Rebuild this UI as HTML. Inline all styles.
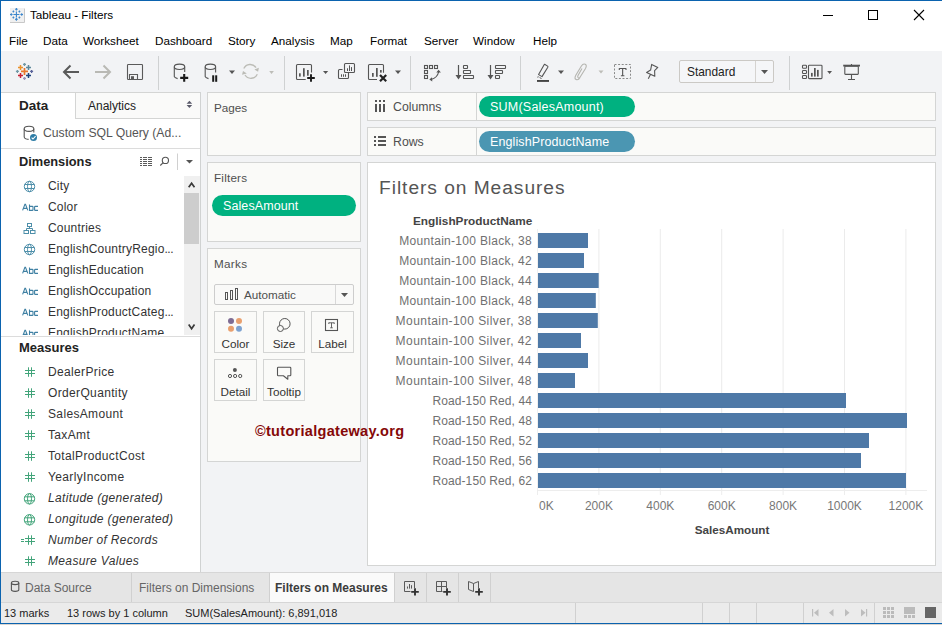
<!DOCTYPE html>
<html><head><meta charset="utf-8">
<style>
*{margin:0;padding:0;box-sizing:border-box}
html,body{width:942px;height:625px;overflow:hidden;background:#fff}
body{position:relative;font-family:"Liberation Sans",sans-serif;font-size:12px;color:#333}
.a{position:absolute;white-space:nowrap}
.t{position:absolute;white-space:nowrap;line-height:14px}
svg{position:absolute;overflow:visible}
/* window border */
#bt{left:0;top:0;width:942px;height:1px;background:#0B63AF}
#bl{left:0;top:0;width:1px;height:624px;background:#0B63AF}
#bb{left:0;top:623px;width:942px;height:1px;background:#0B63AF}
#bb2{left:0;top:624px;width:942px;height:1px;background:#DAD5D0}
#tb{left:1px;top:51px;width:941px;height:41px;background:#F2F3F5}
#tbl{left:1px;top:92px;width:941px;height:1px;background:#D5D7D7}
.sep{position:absolute;width:1px;background:#CFD1D2;top:56px;height:34px}
.menu{top:34px;font-size:11.7px;color:#000}
/* panels */
#lp{left:1px;top:92px;width:199px;height:480px;background:#fff;border-top:1px solid #D4D5D4}
#lpb{left:200px;top:92px;width:1px;height:480px;background:#D0D2D2}
#mid{left:201px;top:92px;width:741px;height:480px;background:#F2F3F5}
.card{position:absolute;background:#FAFAF8;border:1px solid #D4D5D4}
.pill{position:absolute;border-radius:11px;color:#fff;font-size:12.5px;line-height:23px;padding-left:11px;letter-spacing:0.1px;overflow:hidden}
.green{background:#00B180}
.blue{background:#4B96B2}
.it{position:absolute;left:48px;font-size:12px;color:#333;line-height:14px}
.ic{position:absolute;left:22px}
</style></head><body>
<div class="a" id="bt"></div><div class="a" id="bl"></div><div class="a" id="bb"></div><div class="a" id="bb2"></div>

<!-- title bar -->
<svg style="left:0;top:0" width="30" height="30">
<rect x="10" y="8" width="14" height="14" fill="#F0F0F0"/>
<path d="M24.5 8.5V22.5H10" fill="none" stroke="#C8C8C8" stroke-width="1"/>
<g stroke="#3B86CC" stroke-width="1.1" fill="none">
<path d="M16.4 11.5V17.5M13.4 14.5H19.4"/>
<path d="M16.4 7.9V10.5M15.1 9.2H17.7"/><path d="M16.4 18.1V20.7M15.1 19.4H17.7"/>
<path d="M11.3 13.2V15.8M10 14.5H12.6"/><path d="M21.7 13.2V15.8M20.4 14.5H23"/>
<path d="M13.4 10.6V12.4M12.5 11.5H14.3"/><path d="M19.4 10.6V12.4M18.5 11.5H20.3"/>
<path d="M13.4 16.6V18.4M12.5 17.5H14.3"/><path d="M19.4 16.6V18.4M18.5 17.5H20.3"/>
</g></svg>
<div class="t" style="left:30px;top:8px;font-size:11.7px;color:#000">Tableau - Filters</div>
<svg style="left:823px;top:10px" width="12" height="12"><path d="M0 5.5H10" stroke="#000" stroke-width="1"/></svg>
<svg style="left:868px;top:10px" width="12" height="12"><rect x="0.5" y="0.5" width="9" height="9" fill="none" stroke="#000" stroke-width="1"/></svg>
<svg style="left:914px;top:10px" width="12" height="12"><path d="M0 0L10 10M10 0L0 10" stroke="#000" stroke-width="1.1"/></svg>

<!-- menu -->
<div class="t menu" style="left:9px">File</div>
<div class="t menu" style="left:43px">Data</div>
<div class="t menu" style="left:83px">Worksheet</div>
<div class="t menu" style="left:155px">Dashboard</div>
<div class="t menu" style="left:228px">Story</div>
<div class="t menu" style="left:271px">Analysis</div>
<div class="t menu" style="left:330px">Map</div>
<div class="t menu" style="left:370px">Format</div>
<div class="t menu" style="left:424px">Server</div>
<div class="t menu" style="left:473px">Window</div>
<div class="t menu" style="left:533px">Help</div>

<!-- toolbar -->
<div class="a" id="tb"></div>
<div class="sep" style="left:48px"></div>
<div class="sep" style="left:158px"></div>
<div class="sep" style="left:284px"></div>
<div class="sep" style="left:410px"></div>
<div class="sep" style="left:520px"></div>
<div class="sep" style="left:789px"></div>
<svg style="left:0;top:0" width="942" height="100" viewBox="0 0 942 100">
<!-- tableau logo -->
<g stroke-width="1.5" fill="none">
<path d="M24.5 67.9V74.9M21 71.4H28" stroke="#E8762B" stroke-width="1.7"/>
<path d="M20.5 64.9V69.9M18 67.4H23" stroke="#EB912B"/>
<path d="M28.5 64.9V69.9M26 67.4H31" stroke="#5B879B"/>
<path d="M20.5 73V78M18 75.5H23" stroke="#C72035"/>
<path d="M28.5 73V78M26 75.5H31" stroke="#1F447E"/>
<path d="M24.5 62.9V65.9M23 64.4H26" stroke="#7099A6" stroke-width="1.3"/>
<path d="M17.4 69.9V72.9M15.9 71.4H18.9" stroke="#7099A6" stroke-width="1.3"/>
<path d="M31.6 69.9V72.9M30.1 71.4H33.1" stroke="#59629A" stroke-width="1.3"/>
<path d="M24.5 76.9V79.9M23 78.4H26" stroke="#9A93BA" stroke-width="1.3"/>
</g>
<!-- back / forward -->
<path d="M64 72H79M70.5 65.5L64 72L70.5 78.5" fill="none" stroke="#5A5A5A" stroke-width="2"/>
<path d="M95 72H110M103.5 65.5L110 72L103.5 78.5" fill="none" stroke="#B9B9B4" stroke-width="2"/>
<!-- save -->
<rect x="127.5" y="64.5" width="15" height="15" rx="0.8" fill="none" stroke="#5A5A5A" stroke-width="1.1"/>
<path d="M129.5 79.5V74.5H137.5V79.5" fill="none" stroke="#5A5A5A" stroke-width="1.1"/>
<rect x="131" y="76.2" width="3" height="3.3" fill="#5A5A5A"/>
<!-- db add -->
<g fill="none" stroke="#555" stroke-width="1.1">
<ellipse cx="179.5" cy="66.8" rx="5.2" ry="2.7"/>
<path d="M174.3 66.8V76.6Q174.6 77.8 177.6 78.6"/><path d="M184.7 66.8V72"/>
<ellipse cx="210.4" cy="66.8" rx="5.2" ry="2.7"/>
<path d="M205.2 66.8V76.6Q205.5 77.8 208.5 78.6"/><path d="M215.6 66.8V72.6"/>
</g>
<path d="M184.2 74V81.8M180.2 77.9H188.2" stroke="#1A1A1A" stroke-width="2.1"/>
<g fill="#1A1A1A"><rect x="212.2" y="75.3" width="2" height="6.5"/><rect x="215.2" y="75.3" width="2" height="6.5"/></g>
<path d="M229 70.5h6l-3 3.5z" fill="#555"/>
<!-- refresh -->
<g fill="none" stroke="#BCBCB6" stroke-width="1.3">
<path d="M243.8 68.6A7 7 0 0 1 256 67.6"/><path d="M257.3 74.2A7 7 0 0 1 245 75"/>
</g>
<path d="M258.9 67.8L254.4 69.5L258.1 71.8z M242 74.8L243 71L246.8 73.4z" fill="#BCBCB6"/>
<path d="M269.2 71.1h4.7l-2.35 2.8z" fill="#BDBDB8"/>
<!-- new worksheet -->
<path d="M305.7 79.5H297.5Q296.5 79.5 296.5 78.5V65.5Q296.5 64.5 297.5 64.5H310.5Q311.5 64.5 311.5 65.5V72.6" fill="none" stroke="#555" stroke-width="1.1"/>
<g fill="#555"><rect x="299" y="73.3" width="1.7" height="3.3"/><rect x="303" y="68.2" width="1.7" height="8.4"/><rect x="307" y="70" width="1.7" height="5.7"/></g>
<path d="M311 74.3V81.7M307.2 78H314.8" stroke="#1A1A1A" stroke-width="1.9"/>
<path d="M323 71h5.2l-2.6 3z" fill="#555"/>
<!-- duplicate -->
<g fill="none" stroke="#555" stroke-width="1.1">
<rect x="344.5" y="63.5" width="10" height="9" rx="1"/>
<path d="M342.5 69.5H339.5Q338.5 69.5 338.5 70.5V77.5Q338.5 78.5 339.5 78.5H347.5Q348.5 78.5 348.5 77.5V73"/>
</g>
<g fill="#555"><rect x="347" y="68.3" width="1" height="2.7"/><rect x="349" y="65.4" width="1" height="5.6"/><rect x="351" y="67.1" width="1" height="3.9"/><rect x="341" y="74.3" width="1" height="2.5"/><rect x="343" y="74.3" width="1" height="2.5"/><rect x="345" y="74.3" width="1" height="2.5"/></g>
<!-- clear -->
<path d="M377 79.5H369.5Q368.5 79.5 368.5 78.5V65.5Q368.5 64.5 369.5 64.5H382.5Q383.5 64.5 383.5 65.5V72.8" fill="none" stroke="#555" stroke-width="1.1"/>
<g fill="#555"><rect x="372" y="73" width="1.7" height="3.8"/><rect x="376" y="68" width="1.7" height="8.8"/><rect x="380" y="70" width="1.7" height="2.6"/></g>
<path d="M380 75L386.2 81.2M386.2 75L380 81.2" stroke="#222" stroke-width="2.2"/>
<path d="M395 70.5h6l-3 3.5z" fill="#555"/>
<!-- swap -->
<g fill="none" stroke="#555" stroke-width="1.1">
<rect x="424.5" y="65.5" width="3" height="3"/><rect x="429.5" y="65.5" width="3" height="3"/><rect x="434.5" y="65.5" width="3" height="3"/>
<rect x="424.5" y="70.5" width="3" height="3"/><rect x="424.5" y="75.5" width="3" height="3"/>
<path d="M438.6 72Q437.5 77.5 431 79.6"/>
</g>
<path d="M438.6 69.8L436.3 72.6H440.9z M429.3 79.6L432 77.3L432.3 81.6z" fill="#555"/>
<!-- sort asc -->
<path d="M458.5 65V78" stroke="#555" stroke-width="1.2"/><path d="M455.5 75L458.5 79.5L461.5 75z" fill="#555"/>
<g fill="none" stroke="#555" stroke-width="1.1">
<rect x="463.5" y="65.5" width="4" height="3" rx="0.5"/><rect x="463.5" y="70.5" width="7" height="3" rx="0.5"/><rect x="463.5" y="75.5" width="10" height="3" rx="0.5"/>
</g>
<!-- sort desc -->
<path d="M490.5 65V78" stroke="#555" stroke-width="1.2"/><path d="M487.5 75L490.5 79.5L493.5 75z" fill="#555"/>
<g fill="none" stroke="#555" stroke-width="1.1">
<rect x="495.5" y="65.5" width="10" height="3" rx="0.5"/><rect x="495.5" y="70.5" width="7" height="3" rx="0.5"/><rect x="495.5" y="75.5" width="4" height="3" rx="0.5"/>
</g>
<!-- highlighter -->
<path d="M544.6 64.3L547.6 66.1Q548.2 66.6 547.8 67.3L542 76.6L538.6 74.6L544 65Q544.2 64.3 544.6 64.3z" fill="none" stroke="#555" stroke-width="1.1" stroke-linejoin="round"/>
<path d="M538.2 76.3L537.8 77.6M539.6 77.6L541.5 78.5" stroke="#555" stroke-width="1"/>
<rect x="537" y="80" width="12" height="1.9" fill="#444"/>
<path d="M558 70.5h6l-3 3.5z" fill="#555"/>
<!-- paperclip -->
<path d="M582 68.5L578 75.5Q577.2 77.2 578.3 77.8Q579.5 78.4 580.3 76.8L585.5 68.5Q587.2 65.5 585.2 64.3Q583.2 63.2 581.4 66L575.8 75.3Q574 78.8 576.2 79.6Q578.4 80.5 580 77.5" fill="none" stroke="#B5B5B0" stroke-width="1.1"/>
<path d="M598.5 70.5h5l-2.5 3z" fill="#BDBDB8"/>
<!-- text -->
<rect x="614.5" y="64.5" width="16" height="14" fill="none" stroke="#8A8A8A" stroke-width="1" stroke-dasharray="2 1.6"/>
<path d="M619.3 68.5H626M619.3 68.2V70M626 68.2V70M622.65 68.5V75.6M620.9 75.8H624.4" fill="none" stroke="#555" stroke-width="1.1"/>
<!-- pin -->
<path d="M651.7 64.4L657.8 67.4L654.6 70.6L654.8 76.2L646.6 72.4L650.6 70.1Z M650.4 74.6L648.3 78.7" fill="none" stroke="#555" stroke-width="1.1" stroke-linejoin="round"/>
<!-- standard dropdown -->
<rect x="679.5" y="60.5" width="94" height="22" rx="1.5" fill="#F5F6F8" stroke="#CBC9C5"/>
<path d="M755.5 61V82" stroke="#D5D3D0"/>
<path d="M761 69.9h7l-3.5 4z" fill="#555"/>
<!-- show me -->
<g fill="none" stroke="#555" stroke-width="1.1">
<rect x="802.5" y="65.3" width="4" height="3" rx="0.8"/><rect x="802.5" y="70.5" width="4" height="3" rx="0.8"/><rect x="802.5" y="75.5" width="4" height="3" rx="0.8"/>
<rect x="808.5" y="65.3" width="13.5" height="13.3" rx="0.8"/>
</g>
<g fill="#555"><rect x="811" y="72.9" width="1.7" height="3.7"/><rect x="814" y="68" width="1.7" height="8.6"/><rect x="817" y="69.9" width="1.7" height="6.7"/></g>
<path d="M827.2 71h4.8l-2.4 3z" fill="#555"/>
<!-- presentation -->
<g fill="none" stroke="#555" stroke-width="1.1">
<path d="M843.2 65.6H860" stroke-width="1.8"/><rect x="844.8" y="66.2" width="13.5" height="8.2" rx="0.6"/><path d="M851.5 64V65M851.5 74.4V79.5M848 79.5H855"/>
</g>
</svg>
<div class="t" style="left:687px;top:65px;font-size:11.9px;color:#222">Standard</div>


<!-- left panel -->
<div class="a" id="lp"></div><div class="a" id="lpb"></div>
<div class="a" style="left:75px;top:92px;width:125px;height:27px;background:#FAFAF9;border-top:1px solid #D4D5D4;border-left:1px solid #D4D5D4;border-bottom:1px solid #D4D5D4"></div>
<div class="t" style="left:19px;top:99px;font-size:13.5px;font-weight:bold;color:#222">Data</div>
<div class="t" style="left:88px;top:99px;font-size:12px;color:#222">Analytics</div>
<div class="t" style="left:43px;top:126px;font-size:12.2px;color:#555">Custom SQL Query (Ad...</div>
<div class="a" style="left:1px;top:148px;width:199px;height:1px;background:#DCDCDC"></div>
<div class="t" style="left:19px;top:155px;font-size:12.8px;font-weight:bold;color:#222">Dimensions</div>
<div class="a" style="left:184px;top:176px;width:16px;height:159px;background:#F0F0F0"></div>
<div class="a" style="left:184px;top:193px;width:15px;height:51px;background:#CDCDCD"></div>
<div class="a" style="left:1px;top:336px;width:199px;height:1px;background:#DCDCDC"></div>
<div class="t" style="left:19px;top:341px;font-size:13px;font-weight:bold;color:#222">Measures</div>
<div class="a" style="left:1px;top:176px;width:183px;height:159px;overflow:hidden"><div class="a" style="left:-1px;top:-176px;width:183px;height:520px"><div class="t" style="left:48px;top:178.5px;font-size:12px;letter-spacing:0.2px;color:#333">City</div><div class="t" style="left:48px;top:199.5px;font-size:12px;letter-spacing:0.2px;color:#333">Color</div><div class="t" style="left:48px;top:220.5px;font-size:12px;letter-spacing:0.2px;color:#333">Countries</div><div class="t" style="left:48px;top:241.5px;font-size:12px;letter-spacing:0.2px;color:#333">EnglishCountryRegio<span style="letter-spacing:-0.5px">...</span></div><div class="t" style="left:48px;top:262.5px;font-size:12px;letter-spacing:0.2px;color:#333">EnglishEducation</div><div class="t" style="left:48px;top:283.5px;font-size:12px;letter-spacing:0.2px;color:#333">EnglishOccupation</div><div class="t" style="left:48px;top:304.5px;font-size:12px;letter-spacing:0.2px;color:#333">EnglishProductCateg<span style="letter-spacing:-0.5px">...</span></div><div class="t" style="left:48px;top:325.5px;font-size:12px;letter-spacing:0.2px;color:#333">EnglishProductName</div><svg style="left:0;top:0" width="183" height="520"><g fill="none" stroke="#4E8FAA" stroke-width="1"><circle cx="29.5" cy="186.5" r="5.2"/><ellipse cx="29.5" cy="186.5" rx="2" ry="5.2"/><path d="M24.6 184.5H34.4M24.6 188.5H34.4"/></g><path d="M22.6 210.4L24.9 204.4H25.5L27.8 210.4M23.5 208.4H26.9M29.5 204.4V210.4H32.3Q33 210.4 33 209.7V207.1Q33 206.4 32.3 206.4H29.5M38 206.4H35.3Q34.6 206.4 34.6 207.1V209.7Q34.6 210.4 35.3 210.4H38" fill="none" stroke="#3F80A3" stroke-width="1.1"/><g fill="none" stroke="#4E8FAA" stroke-width="1"><rect x="27.5" y="223.5" width="4" height="3"/><rect x="24" y="230.5" width="4.5" height="3"/><rect x="30.5" y="230.5" width="4.5" height="3"/><path d="M29.5 226.5V228.5M26.5 230.5V228.5H32.5V230.5"/></g><g fill="none" stroke="#4E8FAA" stroke-width="1"><circle cx="29.5" cy="249.5" r="5.2"/><ellipse cx="29.5" cy="249.5" rx="2" ry="5.2"/><path d="M24.6 247.5H34.4M24.6 251.5H34.4"/></g><path d="M22.6 273.4L24.9 267.4H25.5L27.8 273.4M23.5 271.4H26.9M29.5 267.4V273.4H32.3Q33 273.4 33 272.7V270.1Q33 269.4 32.3 269.4H29.5M38 269.4H35.3Q34.6 269.4 34.6 270.1V272.7Q34.6 273.4 35.3 273.4H38" fill="none" stroke="#3F80A3" stroke-width="1.1"/><path d="M22.6 294.4L24.9 288.4H25.5L27.8 294.4M23.5 292.4H26.9M29.5 288.4V294.4H32.3Q33 294.4 33 293.7V291.1Q33 290.4 32.3 290.4H29.5M38 290.4H35.3Q34.6 290.4 34.6 291.1V293.7Q34.6 294.4 35.3 294.4H38" fill="none" stroke="#3F80A3" stroke-width="1.1"/><path d="M22.6 315.4L24.9 309.4H25.5L27.8 315.4M23.5 313.4H26.9M29.5 309.4V315.4H32.3Q33 315.4 33 314.7V312.1Q33 311.4 32.3 311.4H29.5M38 311.4H35.3Q34.6 311.4 34.6 312.1V314.7Q34.6 315.4 35.3 315.4H38" fill="none" stroke="#3F80A3" stroke-width="1.1"/><path d="M22.6 336.4L24.9 330.4H25.5L27.8 336.4M23.5 334.4H26.9M29.5 330.4V336.4H32.3Q33 336.4 33 335.7V333.1Q33 332.4 32.3 332.4H29.5M38 332.4H35.3Q34.6 332.4 34.6 333.1V335.7Q34.6 336.4 35.3 336.4H38" fill="none" stroke="#3F80A3" stroke-width="1.1"/></svg></div></div>
<div class="t" style="left:48px;top:364.8px;font-size:12px;letter-spacing:0.35px;color:#333;">DealerPrice</div><div class="t" style="left:48px;top:385.8px;font-size:12px;letter-spacing:0.35px;color:#333;">OrderQuantity</div><div class="t" style="left:48px;top:406.8px;font-size:12px;letter-spacing:0.35px;color:#333;">SalesAmount</div><div class="t" style="left:48px;top:427.8px;font-size:12px;letter-spacing:0.35px;color:#333;">TaxAmt</div><div class="t" style="left:48px;top:448.8px;font-size:12px;letter-spacing:0.35px;color:#333;">TotalProductCost</div><div class="t" style="left:48px;top:469.8px;font-size:12px;letter-spacing:0.35px;color:#333;">YearlyIncome</div><div class="t" style="left:48px;top:490.8px;font-size:12px;letter-spacing:0.35px;color:#333;font-style:italic;">Latitude (generated)</div><div class="t" style="left:48px;top:511.8px;font-size:12px;letter-spacing:0.35px;color:#333;font-style:italic;">Longitude (generated)</div><div class="t" style="left:48px;top:532.8px;font-size:12px;letter-spacing:0.35px;color:#333;font-style:italic;">Number of Records</div><div class="t" style="left:48px;top:553.8px;font-size:12px;letter-spacing:0.35px;color:#333;font-style:italic;">Measure Values</div>
<svg style="left:0;top:0" width="200" height="600"><path d="M28.5 367.3V376.8M31.5 367.3V376.8M25 370.5H35M25 373.5H35" fill="none" stroke="#42A47A" stroke-width="1"/><path d="M28.5 388.3V397.8M31.5 388.3V397.8M25 391.5H35M25 394.5H35" fill="none" stroke="#42A47A" stroke-width="1"/><path d="M28.5 409.3V418.8M31.5 409.3V418.8M25 412.5H35M25 415.5H35" fill="none" stroke="#42A47A" stroke-width="1"/><path d="M28.5 430.3V439.8M31.5 430.3V439.8M25 433.5H35M25 436.5H35" fill="none" stroke="#42A47A" stroke-width="1"/><path d="M28.5 451.3V460.8M31.5 451.3V460.8M25 454.5H35M25 457.5H35" fill="none" stroke="#42A47A" stroke-width="1"/><path d="M28.5 472.3V481.8M31.5 472.3V481.8M25 475.5H35M25 478.5H35" fill="none" stroke="#42A47A" stroke-width="1"/><g fill="none" stroke="#42A47A" stroke-width="1"><circle cx="29.5" cy="498.8" r="5.2"/><ellipse cx="29.5" cy="498.8" rx="2" ry="5.2"/><path d="M24.6 496.8H34.4M24.6 500.8H34.4"/></g><g fill="none" stroke="#42A47A" stroke-width="1"><circle cx="29.5" cy="519.8" r="5.2"/><ellipse cx="29.5" cy="519.8" rx="2" ry="5.2"/><path d="M24.6 517.8H34.4M24.6 521.8H34.4"/></g><path d="M28.5 535.3V544.8M31.5 535.3V544.8M25 538.5H35M25 541.5H35" fill="none" stroke="#42A47A" stroke-width="1"/><path d="M21 539.5H24M21 541.5H24" stroke="#42A47A" stroke-width="1"/><path d="M28.5 556.3V565.8M31.5 556.3V565.8M25 559.5H35M25 562.5H35" fill="none" stroke="#42A47A" stroke-width="1"/>
<!-- custom sql icon -->
<g fill="none" stroke="#555" stroke-width="1.1"><ellipse cx="29" cy="128.8" rx="4.8" ry="2.6"/><path d="M24.2 128.8V137Q24.4 139 28.6 139.4M33.8 128.8V132.6"/></g>
<circle cx="33.5" cy="137.5" r="3.5" fill="#2E7DA6"/><path d="M31.6 137.6L33 139L35.6 136.2" fill="none" stroke="#fff" stroke-width="1.1"/>
<!-- data tab updown -->
<path d="M186.6 103.8h5.6l-2.8-3z M186.6 105h5.6l-2.8 3z" fill="#5A5A6A"/>
<!-- dimensions icons -->
<path d="M140 157.5H142M143 157.5H147M148 157.5H152M140 159.5H142M143 159.5H147M148 159.5H152M140 161.5H142M143 161.5H147M148 161.5H152M140 163.5H142M143 163.5H147M148 163.5H152M140 165.5H142M143 165.5H147M148 165.5H152" fill="none" stroke="#5A5A5A" stroke-width="1"/>
<g fill="none" stroke="#555" stroke-width="1.1"><circle cx="165.4" cy="160.4" r="3.1"/><path d="M163.2 162.6L160.3 165.5"/></g>
<path d="M177.5 153.5V170" stroke="#D0D0D0"/>
<path d="M186 160h7l-3.5 3.5z" fill="#555"/>
<!-- scroll arrows -->
<path d="M188.7 187.2L191.6 183.2L194.5 187.2M188.7 324.6L191.6 328.8L194.5 324.6" fill="none" stroke="#3A3A3A" stroke-width="1.7"/>
</svg>

<!-- middle -->
<div class="a" id="mid"></div>
<div class="card" style="left:207px;top:92px;width:154px;height:64px"></div>
<div class="card" style="left:207px;top:162px;width:154px;height:80px"></div>
<div class="card" style="left:207px;top:248px;width:154px;height:214px"></div>
<div class="t" style="left:214px;top:101px;font-size:11.7px;color:#4F4F4F">Pages</div>
<div class="t" style="left:214px;top:171px;font-size:11.7px;letter-spacing:0.2px;color:#4F4F4F">Filters</div>
<div class="pill green" style="left:212px;top:195px;width:144px;height:21px">SalesAmount</div>
<div class="t" style="left:214px;top:257px;font-size:11.7px;letter-spacing:0.3px;color:#4F4F4F">Marks</div>
<div class="a" style="left:214px;top:284px;width:140px;height:21px;background:#F9F9F8;border:1px solid #CDCDCD;border-radius:2px"></div>
<div class="a" style="left:335px;top:285px;width:1px;height:19px;background:#D8D8D8"></div>
<div class="t" style="left:244px;top:288px;font-size:11.7px;color:#4F4F4F">Automatic</div>
<div class="a" style="left:214px;top:311px;width:43px;height:42px;border:1px solid #D4D5D4;background:#FAFAF8"></div>
<div class="t" style="left:214px;top:337px;width:43px;text-align:center;font-size:11.7px;color:#333">Color</div>
<div class="a" style="left:263px;top:311px;width:42px;height:42px;border:1px solid #D4D5D4;background:#FAFAF8"></div>
<div class="t" style="left:263px;top:337px;width:42px;text-align:center;font-size:11.7px;color:#333">Size</div>
<div class="a" style="left:311px;top:311px;width:43px;height:42px;border:1px solid #D4D5D4;background:#FAFAF8"></div>
<div class="t" style="left:311px;top:337px;width:43px;text-align:center;font-size:11.7px;color:#333">Label</div>
<div class="a" style="left:214px;top:359px;width:43px;height:42px;border:1px solid #D4D5D4;background:#FAFAF8"></div>
<div class="t" style="left:214px;top:385px;width:43px;text-align:center;font-size:11.7px;color:#333">Detail</div>
<div class="a" style="left:263px;top:359px;width:42px;height:42px;border:1px solid #D4D5D4;background:#FAFAF8"></div>
<div class="t" style="left:263px;top:385px;width:42px;text-align:center;font-size:11.7px;color:#333">Tooltip</div>
<svg style="left:0;top:0" width="942" height="600">
<path d="M225.5 289V299.5M224.5 299.5H227M225.5 289h1.5v10.5h-1.5z" fill="none" stroke="none"/>
<g fill="none" stroke="#555" stroke-width="1"><rect x="225.5" y="292.5" width="2" height="7"/><rect x="230.5" y="290.5" width="2" height="9"/><rect x="235.5" y="288.5" width="2" height="11"/></g>
<path d="M341 293h7l-3.5 3.9z" fill="#555"/>
<circle cx="231" cy="321" r="3" fill="#7E6C93"/><circle cx="239" cy="321" r="3" fill="#E9A06E"/>
<circle cx="231" cy="328.8" r="3" fill="#E9A06E"/><circle cx="239" cy="328.8" r="3" fill="#7DA2D0"/>
<g fill="none" stroke="#555" stroke-width="1"><circle cx="284.8" cy="323.8" r="5.3"/><circle cx="280.4" cy="328.5" r="3" fill="#FAFAF8"/></g>
<rect x="325.5" y="319.5" width="12" height="11" fill="none" stroke="#555" stroke-width="1.1"/>
<path d="M328.8 322.8H334.2M331.5 322.8V327.8M330.2 327.8H332.8M328.8 322.6V324M334.2 322.6V324" fill="none" stroke="#555" stroke-width="0.9"/>
<circle cx="234.9" cy="370" r="2" fill="#555"/>
<g fill="none" stroke="#555" stroke-width="1"><circle cx="230" cy="376" r="1.6"/><circle cx="235.1" cy="376" r="1.6"/><circle cx="240.2" cy="376" r="1.6"/></g>
<path d="M278.3 367.3H290Q290.8 367.3 290.8 368.1V374.9Q290.8 375.7 290 375.7H287.8V379.3L283.4 375.7H278.3Q277.5 375.7 277.5 374.9V368.1Q277.5 367.3 278.3 367.3z" fill="none" stroke="#555" stroke-width="1.1" stroke-linejoin="round"/>
</svg>
<div class="card" style="left:367px;top:92px;width:569px;height:29px"></div>
<div class="a" style="left:476px;top:93px;width:1px;height:27px;background:#D4D5D4"></div>
<div class="t" style="left:393px;top:100px;font-size:12.3px;color:#4F4F4F">Columns</div>
<div class="pill green" style="left:479px;top:96px;width:156px;height:21px;letter-spacing:0.22px">SUM(SalesAmount)</div>
<div class="card" style="left:367px;top:127px;width:569px;height:29px"></div>
<div class="a" style="left:476px;top:128px;width:1px;height:27px;background:#D4D5D4"></div>
<div class="t" style="left:393px;top:135px;font-size:12.3px;color:#4F4F4F">Rows</div>
<div class="pill blue" style="left:479px;top:131px;width:156px;height:21px">EnglishProductName</div>
<svg style="left:0;top:0" width="942" height="200">
<g fill="#555"><rect x="375" y="104" width="2" height="8"/><rect x="379" y="104" width="2" height="8"/><rect x="383" y="104" width="2" height="8"/>
<rect x="375" y="100" width="2" height="2"/><rect x="379" y="100" width="2" height="2"/><rect x="383" y="100" width="2" height="2"/>
<rect x="374" y="136" width="2" height="2"/><rect x="374" y="140" width="2" height="2"/><rect x="374" y="144" width="2" height="2"/>
<rect x="378" y="136" width="8" height="2"/><rect x="378" y="140" width="8" height="2"/><rect x="378" y="144" width="8" height="2"/></g>
</svg>
<div class="a" style="left:367px;top:162px;width:569px;height:404px;background:#fff;border:1px solid #D4D5D4"></div>
<div class="t" style="left:379px;top:177px;font-size:19.2px;line-height:22px;letter-spacing:0.95px;color:#555">Filters on Measures</div>
<div class="t" style="left:413px;top:214px;font-size:11.8px;font-weight:bold;color:#444">EnglishProductName</div>
<svg style="left:0;top:0" width="942" height="600"><path d="M598.9 229V490" stroke="#EBEBEB" stroke-width="1"/><path d="M660.3 229V490" stroke="#EBEBEB" stroke-width="1"/><path d="M721.7 229V490" stroke="#EBEBEB" stroke-width="1"/><path d="M783.1 229V490" stroke="#EBEBEB" stroke-width="1"/><path d="M844.5 229V490" stroke="#EBEBEB" stroke-width="1"/><path d="M905.9 229V490" stroke="#EBEBEB" stroke-width="1"/><path d="M537.5 229V490" stroke="#F0F0F0" stroke-width="1"/><rect x="538" y="233" width="50.0" height="15" fill="#4E79A7"/><rect x="538" y="253" width="46.0" height="15" fill="#4E79A7"/><rect x="538" y="273" width="60.7" height="15" fill="#4E79A7"/><rect x="538" y="293" width="57.8" height="15" fill="#4E79A7"/><rect x="538" y="313" width="59.8" height="15" fill="#4E79A7"/><rect x="538" y="333" width="43.0" height="15" fill="#4E79A7"/><rect x="538" y="353" width="50.0" height="15" fill="#4E79A7"/><rect x="538" y="373" width="37.0" height="15" fill="#4E79A7"/><rect x="538" y="393" width="308.0" height="15" fill="#4E79A7"/><rect x="538" y="413" width="369.0" height="15" fill="#4E79A7"/><rect x="538" y="433" width="331.0" height="15" fill="#4E79A7"/><rect x="538" y="453" width="323.0" height="15" fill="#4E79A7"/><rect x="538" y="473" width="368.0" height="15" fill="#4E79A7"/><path d="M537 490.5H927" stroke="#EDEDED" stroke-width="1"/><path d="M537.5 491V495" stroke="#EDEDED" stroke-width="1"/><path d="M598.9 491V495" stroke="#EDEDED" stroke-width="1"/><path d="M660.3 491V495" stroke="#EDEDED" stroke-width="1"/><path d="M721.7 491V495" stroke="#EDEDED" stroke-width="1"/><path d="M783.1 491V495" stroke="#EDEDED" stroke-width="1"/><path d="M844.5 491V495" stroke="#EDEDED" stroke-width="1"/><path d="M905.9 491V495" stroke="#EDEDED" stroke-width="1"/></svg>
<div class="t" style="left:332px;top:233.7px;width:200px;text-align:right;font-size:12px;letter-spacing:0.3px;color:#707070">Mountain-100 Black, 38</div>
<div class="t" style="left:332px;top:253.7px;width:200px;text-align:right;font-size:12px;letter-spacing:0.3px;color:#707070">Mountain-100 Black, 42</div>
<div class="t" style="left:332px;top:273.7px;width:200px;text-align:right;font-size:12px;letter-spacing:0.3px;color:#707070">Mountain-100 Black, 44</div>
<div class="t" style="left:332px;top:293.7px;width:200px;text-align:right;font-size:12px;letter-spacing:0.3px;color:#707070">Mountain-100 Black, 48</div>
<div class="t" style="left:332px;top:313.7px;width:200px;text-align:right;font-size:12px;letter-spacing:0.45px;color:#707070">Mountain-100 Silver, 38</div>
<div class="t" style="left:332px;top:333.7px;width:200px;text-align:right;font-size:12px;letter-spacing:0.45px;color:#707070">Mountain-100 Silver, 42</div>
<div class="t" style="left:332px;top:353.7px;width:200px;text-align:right;font-size:12px;letter-spacing:0.45px;color:#707070">Mountain-100 Silver, 44</div>
<div class="t" style="left:332px;top:373.7px;width:200px;text-align:right;font-size:12px;letter-spacing:0.45px;color:#707070">Mountain-100 Silver, 48</div>
<div class="t" style="left:332px;top:393.7px;width:200px;text-align:right;font-size:12px;letter-spacing:0.09px;color:#707070">Road-150 Red, 44</div>
<div class="t" style="left:332px;top:413.7px;width:200px;text-align:right;font-size:12px;letter-spacing:0.09px;color:#707070">Road-150 Red, 48</div>
<div class="t" style="left:332px;top:433.7px;width:200px;text-align:right;font-size:12px;letter-spacing:0.09px;color:#707070">Road-150 Red, 52</div>
<div class="t" style="left:332px;top:453.7px;width:200px;text-align:right;font-size:12px;letter-spacing:0.09px;color:#707070">Road-150 Red, 56</div>
<div class="t" style="left:332px;top:473.7px;width:200px;text-align:right;font-size:12px;letter-spacing:0.09px;color:#707070">Road-150 Red, 62</div>
<div class="t" style="left:539px;top:499px;font-size:12px;color:#777">0K</div>
<div class="t" style="left:538.9px;top:499px;width:120px;text-align:center;font-size:12px;color:#777">200K</div>
<div class="t" style="left:600.3px;top:499px;width:120px;text-align:center;font-size:12px;color:#777">400K</div>
<div class="t" style="left:661.7px;top:499px;width:120px;text-align:center;font-size:12px;color:#777">600K</div>
<div class="t" style="left:723.1px;top:499px;width:120px;text-align:center;font-size:12px;color:#777">800K</div>
<div class="t" style="left:784.5px;top:499px;width:120px;text-align:center;font-size:12px;color:#777">1000K</div>
<div class="t" style="left:845.9px;top:499px;width:120px;text-align:center;font-size:12px;color:#777">1200K</div>
<div class="t" style="left:632px;top:523px;width:200px;text-align:center;font-size:11.7px;font-weight:bold;color:#444">SalesAmount</div>
<div class="t" style="left:255px;top:424px;font-size:14.5px;font-weight:bold;letter-spacing:0.3px;color:#850808">©tutorialgateway.org</div>

<!-- bottom -->
<div class="a" style="left:1px;top:572px;width:941px;height:1px;background:#D6D6D6"></div>
<div class="a" style="left:1px;top:573px;width:941px;height:29px;background:#E5E5E5"></div>
<div class="a" style="left:1px;top:602px;width:941px;height:1px;background:#D6D6D6"></div>
<div class="a" style="left:1px;top:603px;width:941px;height:20px;background:#EBEBEB"></div>
<div class="a" style="left:131px;top:573px;width:1px;height:29px;background:#D0D0D0"></div>
<div class="a" style="left:426px;top:573px;width:1px;height:29px;background:#D0D0D0"></div>
<div class="a" style="left:458px;top:573px;width:1px;height:29px;background:#D0D0D0"></div>
<div class="a" style="left:490px;top:573px;width:1px;height:29px;background:#D0D0D0"></div>
<div class="a" style="left:269px;top:573px;width:126px;height:29px;background:#FAFAFA;border-left:1px solid #D0D0D0;border-right:1px solid #D0D0D0"></div>
<div class="t" style="left:25px;top:581px;font-size:12px;color:#666">Data Source</div>
<div class="t" style="left:139px;top:581px;font-size:12px;color:#666">Filters on Dimensions</div>
<div class="t" style="left:275px;top:581px;font-size:12px;font-weight:bold;color:#3C3C3C">Filters on Measures</div>
<div class="a" style="left:575px;top:603px;width:1px;height:20px;background:#D0D0D0"></div>
<div class="a" style="left:702px;top:603px;width:1px;height:20px;background:#D0D0D0"></div>
<div class="a" style="left:729px;top:603px;width:1px;height:20px;background:#D0D0D0"></div>
<div class="a" style="left:756px;top:603px;width:1px;height:20px;background:#D0D0D0"></div>
<div class="a" style="left:803px;top:603px;width:1px;height:20px;background:#D0D0D0"></div>
<div class="a" style="left:874px;top:603px;width:1px;height:20px;background:#D0D0D0"></div>
<div class="t" style="left:4px;top:606px;font-size:11px;color:#222">13 marks</div>
<div class="t" style="left:67px;top:606px;font-size:11px;color:#222">13 rows by 1 column</div>
<div class="t" style="left:185px;top:606px;font-size:11px;color:#222">SUM(SalesAmount): 6,891,018</div>
<svg style="left:0;top:0" width="942" height="625">
<g fill="none" stroke="#555" stroke-width="1.1"><ellipse cx="15.1" cy="582.9" rx="3.7" ry="1.7"/><path d="M11.4 582.9V589.8Q11.4 591.4 15.1 591.4Q18.8 591.4 18.8 589.8V582.9"/></g>
<g fill="none" stroke="#5A5A5A" stroke-width="1">
<path d="M410.5 591.5H404.5V581.5H414.5V588"/>
<path d="M442.5 591.5H436.5V581.5H446.5V588M436.5 586.5H446.5M441.5 581.5V591.5"/>
<path d="M468.5 581.5L473.5 583.5L478.5 581.5V588M468.5 581.5V589.5L473.5 591.5M473.5 583.5V591.5"/>
</g>
<path d="M407.5 588.6V586.5M409.5 588.6V584M411.5 588.6V585.2" stroke="#5A5A5A" stroke-width="1"/>
<path d="M415 588.2V595.5M411.2 591.9H418.8M447 588.2V595.5M443.2 591.9H450.8M479 588.2V595.5M475.2 591.9H482.8" stroke="#333" stroke-width="1.9"/>
<g fill="#BDBDBD">
<rect x="812" y="609" width="1.2" height="7.5"/><path d="M818.5 609V616.5L814 612.75z"/>
<path d="M833.5 609V616.5L829 612.75z"/>
<path d="M845 609V616.5L849.5 612.75z"/>
<path d="M861 609V616.5L865.5 612.75z"/><rect x="866" y="609" width="1.2" height="7.5"/>
</g>
<g fill="#BBBBBB">
<rect x="883" y="607" width="3" height="3"/><rect x="887" y="607" width="3" height="3"/><rect x="891" y="607" width="3" height="3"/>
<rect x="883" y="611" width="3" height="3"/><rect x="887" y="611" width="3" height="3"/><rect x="891" y="611" width="3" height="3"/>
<rect x="883" y="615" width="3" height="3"/><rect x="887" y="615" width="3" height="3"/><rect x="891" y="615" width="3" height="3"/>
<rect x="904" y="607" width="11" height="7"/><rect x="904" y="615" width="3" height="3"/><rect x="908" y="615" width="3" height="3"/><rect x="912" y="615" width="3" height="3"/>
</g>
<rect x="925" y="607" width="11" height="11" fill="#666"/>
</svg>
</body></html>
